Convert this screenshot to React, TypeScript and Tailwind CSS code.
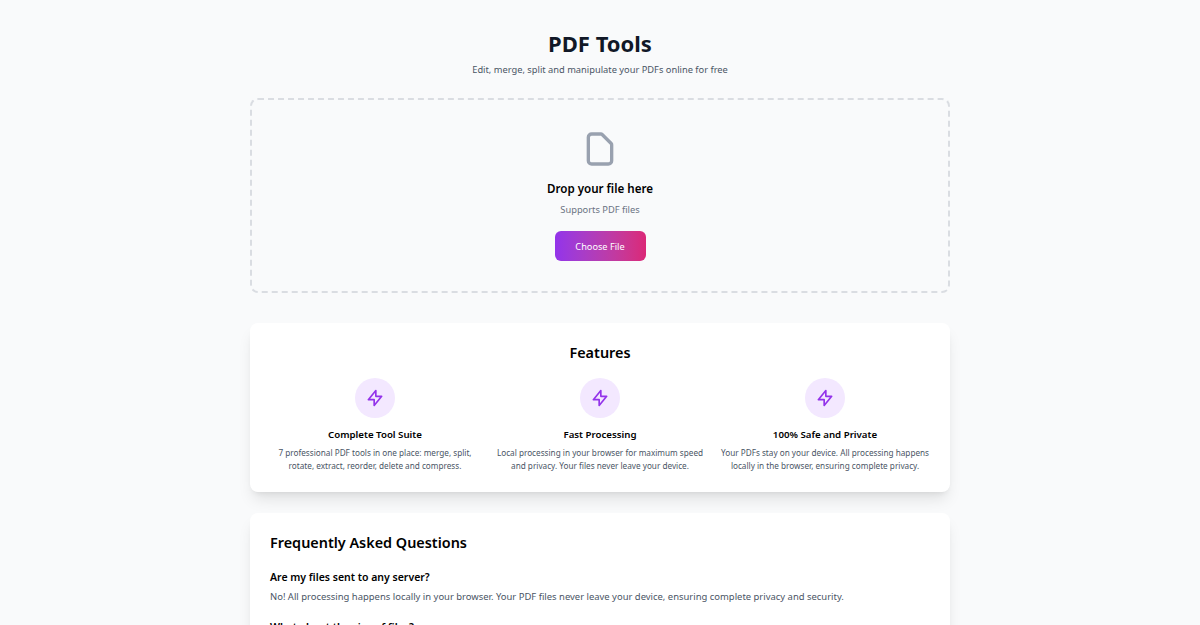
import React from 'react';

const features = [
  {
    title: 'Complete Tool Suite',
    text: '7 professional PDF tools in one place: merge, split, rotate, extract, reorder, delete and compress.',
  },
  {
    title: 'Fast Processing',
    text: 'Local processing in your browser for maximum speed and privacy. Your files never leave your device.',
  },
  {
    title: '100% Safe and Private',
    text: 'Your PDFs stay on your device. All processing happens locally in the browser, ensuring complete privacy.',
  },
];

const faqs = [
  {
    q: 'Are my files sent to any server?',
    a: 'No! All processing happens locally in your browser. Your PDF files never leave your device, ensuring complete privacy and security.',
  },
  {
    q: 'What about the size of files?',
    a: 'There are no upload limits, since your PDF files are handled by your own device from start to finish.',
  },
];

const App: React.FC = () => {
  return (
    <div className="min-h-screen bg-[#f9fafb] font-['Noto_Sans',sans-serif]">
      <div className="mx-auto max-w-[700px] pt-[27px] pb-8">
        <div className="text-center mb-5">
          <h1 className="text-[22px] font-bold text-[#111827] leading-8 mb-[3px]">PDF Tools</h1>
          <p className="text-[9.3px] leading-4 text-gray-600">Edit, merge, split and manipulate your PDFs online for free</p>
        </div>

        <div className="h-[195px] rounded-lg border-2 border-dashed border-[#dadde2] flex flex-col items-center pt-[29px]">
          <svg className="w-10 h-10 text-gray-400" fill="none" stroke="currentColor" strokeWidth="2" viewBox="0 0 24 24" strokeLinecap="round" strokeLinejoin="round">
            <path d="M7 21h10a2 2 0 0 0 2-2V9.414a1 1 0 0 0-.293-.707l-5.414-5.414A1 1 0 0 0 12.586 3H7a2 2 0 0 0-2 2v14a2 2 0 0 0 2 2z" />
          </svg>
          <p className="mt-[10px] text-[11.6px] font-semibold text-black leading-5">Drop your file here</p>
          <p className="mt-[3px] text-[9.3px] leading-4 text-gray-500">Supports PDF files</p>
          <button className="mt-[13px] w-[91px] h-[30px] pt-px rounded-md bg-gradient-to-r from-[#9333ea] to-[#db2777] text-white text-[9.2px]">
            Choose File
          </button>
        </div>

        <div className="mt-[30px] bg-white rounded-lg shadow-lg px-5 pt-[18px] pb-[20px]">
          <h2 className="text-center text-[14.4px] font-semibold text-black leading-6 mb-[13px]">Features</h2>
          <div className="grid grid-cols-3 gap-[15px]">
            {features.map(f => (
              <div key={f.title} className="flex flex-col items-center text-center">
                <div className="w-10 h-10 rounded-full bg-[#f3e8ff] flex items-center justify-center mb-[9px]">
                  <svg className="w-5 h-5 text-[#9333ea]" fill="none" stroke="currentColor" strokeWidth="2" viewBox="0 0 24 24" strokeLinecap="round" strokeLinejoin="round">
                    <path d="M13 10V3L4 14h7v7l9-11h-7z" />
                  </svg>
                </div>
                <h3 className="text-[9.7px] font-semibold text-black leading-4 mb-[3px]">{f.title}</h3>
                <p className="text-[8.2px] leading-[13px] text-gray-600">{f.text}</p>
              </div>
            ))}
          </div>
        </div>

        <div className="mt-[21px] bg-white rounded-lg shadow-lg px-5 pt-[18px] pb-5">
          <h2 className="text-[14.4px] font-semibold text-black leading-6 mb-[14px]">Frequently Asked Questions</h2>
          <div className="flex flex-col gap-[14px]">
            {faqs.map(f => (
              <div key={f.q}>
                <h3 className="text-[10.5px] font-semibold text-black leading-4 mb-1">{f.q}</h3>
                <p className="text-[9.45px] leading-4 text-gray-600">{f.a}</p>
              </div>
            ))}
          </div>
        </div>
      </div>
    </div>
  );
};

export default App;
